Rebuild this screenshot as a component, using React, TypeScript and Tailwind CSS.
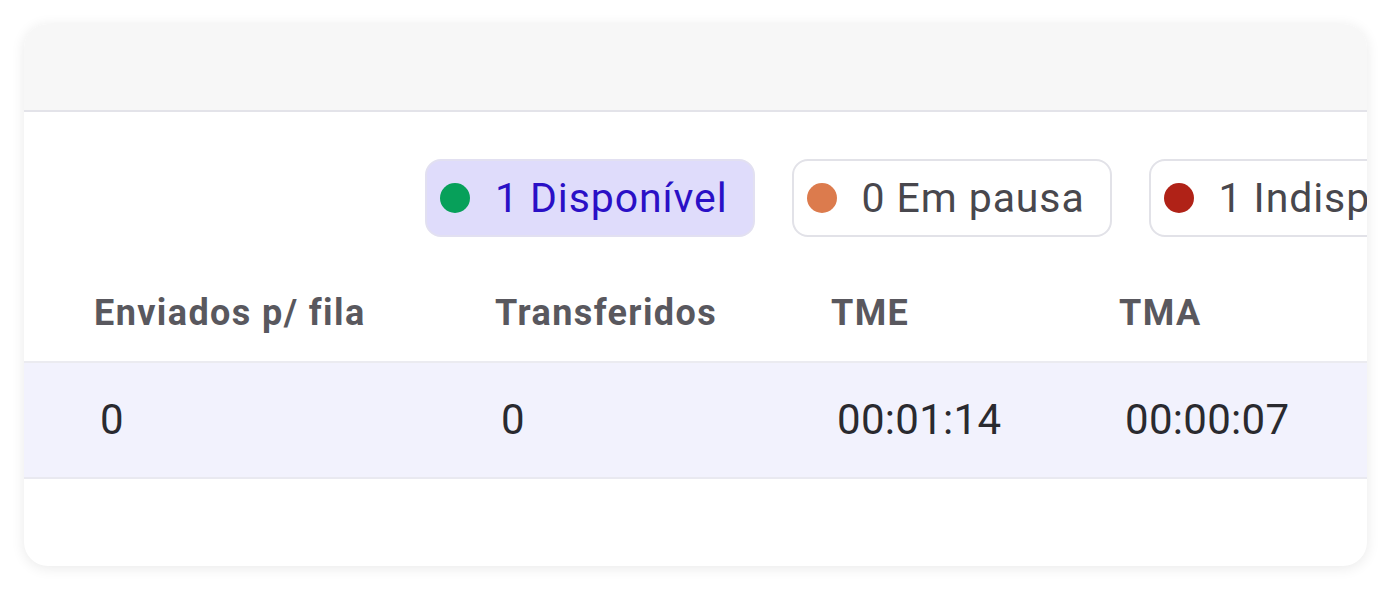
import React from 'react';

const statuses = [
    { label: '1 Disponível', dot: 'bg-[#07a05a]', active: true },
    { label: '0 Em pausa', dot: 'bg-[#dc7b4d]', active: false },
    { label: '1 Indisponível', dot: 'bg-[#b02217]', active: false },
];

const columns = [
    { title: 'Enviados p/ fila', value: '0', width: 'w-[401px]' },
    { title: 'Transferidos', value: '0', width: 'w-[336px]' },
    { title: 'TME', value: '00:01:14', width: 'w-[288px]' },
    { title: 'TMA', value: '00:00:07', width: 'w-[288px]' },
];

export default function App() {
    return (
        <div className="min-h-screen bg-white p-[24px]" style={{ fontFamily: 'Roboto, "Noto Sans", sans-serif' }}>
            <div className="w-[1343px] h-[542px] bg-white rounded-[24px] shadow-[0_2px_14px_rgba(0,0,0,0.09)] overflow-hidden">
                {/* Top band */}
                <div className="h-[88px] bg-[#f7f7f7] border-b-2 border-[#e3e3e9]"></div>

                {/* Status badges */}
                <div className="flex gap-[37px] pl-[401px] mt-[47px] whitespace-nowrap">
                    {statuses.map((s) => (
                        <div
                            key={s.label}
                            className={`shrink-0 h-[78px] flex items-center gap-[25px] pl-[13px] pr-[25px] rounded-[16px] border-2 ${
                                s.active ? 'bg-[#dfdcfb] border-[#e2e0f1] text-[#2a10c6]' : 'bg-white border-[#e2e2e8] text-[#48474d]'
                            }`}
                        >
                            <span className={`w-[30px] h-[30px] rounded-full ${s.dot}`}></span>
                            <span className="text-[41px] leading-none tracking-[0.9px]">{s.label}</span>
                        </div>
                    ))}
                </div>

                {/* Table header */}
                <div className="flex pl-[70px] pt-[56px] pb-[28px] border-b-2 border-[#ebebf0]">
                    {columns.map((c) => (
                        <div key={c.title} className={`shrink-0 ${c.width} text-[36px] leading-[40px] font-bold text-[#59585e] tracking-[1.4px]`}>
                            {c.title}
                        </div>
                    ))}
                </div>

                {/* Table row */}
                <div className="flex pl-[70px] h-[116px] items-center bg-[#f2f2fd] border-b-2 border-[#e9e9f0]">
                    {columns.map((c) => (
                        <div key={c.title} className={`shrink-0 ${c.width} pl-[6px] text-[42px] leading-none text-[#2a2a2f] tracking-[0.3px]`}>
                            {c.value}
                        </div>
                    ))}
                </div>
            </div>
        </div>
    );
}
